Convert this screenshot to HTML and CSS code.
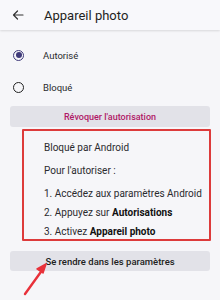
FILE: index.html
```html
<!DOCTYPE html>
<html lang="fr">
<head>
<meta charset="utf-8">
<link rel="stylesheet" href="styles.css">
</head>
<body>
<div class="page">
  <header class="bar">
    <svg class="back" width="12" height="12" viewBox="0 0 12 12"><path d="M11 6H1.5M5.5 2L1.5 6l4 4" fill="none" stroke="#333" stroke-width="1.2" stroke-linecap="round" stroke-linejoin="round"/></svg>
    <span class="title">Appareil photo</span>
  </header>
  <div class="options">
    <div class="opt"><span class="radio on"></span><span>Autorisé</span></div>
    <div class="opt"><span class="radio"></span><span>Bloqué</span></div>
  </div>
  <div class="btn revoke">Révoquer l'autorisation</div>
  <div class="box">
    <p class="l1">Bloqué par Android</p>
    <p class="l2">Pour l'autoriser :</p>
    <p class="l3">1. Accédez aux paramètres Android</p>
    <p class="l4">2. Appuyez sur <b>Autorisations</b></p>
    <p class="l4">3. Activez <b>Appareil photo</b></p>
  </div>
  <div class="btn go">Se rendre dans les paramètres</div>
  <svg class="arrow" width="40" height="45" viewBox="0 0 40 45"><path d="M4 39L22 14" stroke="#e8313a" stroke-width="2.4" stroke-linecap="round"/><path d="M25 9l-9 5 6 4z" fill="#e8313a" stroke="#e8313a" stroke-width="1.5" stroke-linejoin="round"/></svg>
</div>
</body>
</html>
```
FILE: styles.css
```css
html, body { margin: 0; padding: 0; }
body { background: #f6f6f9; font-family: Roboto, "Noto Sans", sans-serif; color: #1f1f22; }
.page { position: relative; width: 220px; height: 300px; overflow: hidden; }
.bar { height: 30px; display: flex; align-items: center; background: #f8f8fb; box-shadow: 0 1px 2px rgba(0,0,0,0.12); }
.back { margin-left: 12px; }
.title { margin-left: 20px; font-size: 13px; color: #1f1f22; }
.options { padding-top: 9px; }
.opt { height: 32px; display: flex; align-items: center; font-size: 9.5px; color: #2a2a2e; }
.radio { width: 9px; height: 9px; border: 1.6px solid #222; border-radius: 50%; margin-left: 13px; margin-right: 19px; box-sizing: content-box; position: relative; }
.radio.on { border-color: #3f3a7a; }
.radio.on::after { content: ""; position: absolute; left: 1.5px; top: 1.5px; width: 6px; height: 6px; border-radius: 50%; background: #3f3a7a; }
.btn { margin: 0 10px; height: 21px; display: flex; align-items: center; justify-content: center; background: #e2e2e8; border-radius: 3px; font-size: 9px; font-weight: 500; }
.revoke { margin-top: 3px; color: #b01866; }
.go { margin-top: 10px; height: 20px; color: #222; font-size: 9.5px; }
.box { margin: 2px 9px 0 22px; border: 2px solid #dd3b3b; border-radius: 1px; padding: 10px 0 0 20px; height: 112px; box-sizing: border-box; font-size: 10px; color: #2a2a2e; }
.box p { margin: 0; line-height: 14px; }
.box b { font-weight: 700; color: #111; }
.l2 { margin-top: 9px !important; }
.l3 { margin-top: 9px !important; }
.l4 { margin-top: 5px !important; }
.arrow { position: absolute; left: 21px; top: 255px; }
```
